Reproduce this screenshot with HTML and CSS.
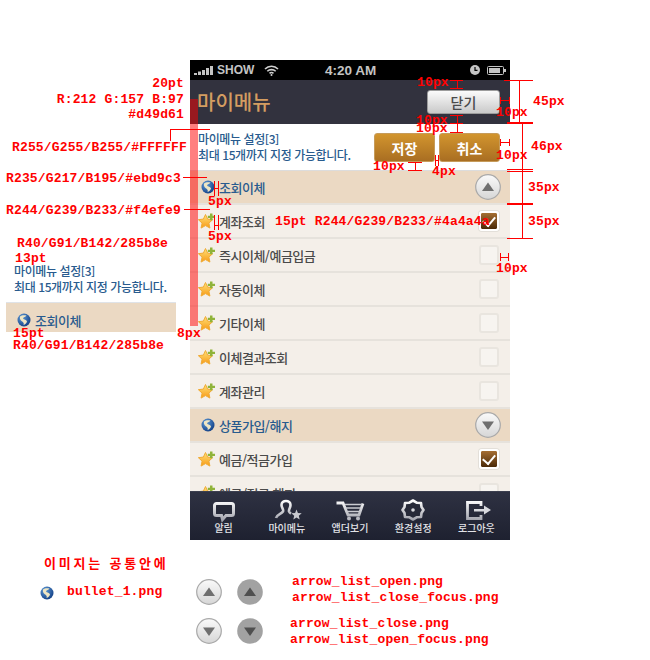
FILE: index.html
```html
<!DOCTYPE html>
<html lang="ko">
<head>
  <meta charset="UTF-8">
  <meta name="viewport" content="width=device-width, initial-scale=1.0">
  <title>마이메뉴</title>
  <link rel="stylesheet" href="styles.css">
</head>
<body>
  <svg class="defs" width="0" height="0">
    <defs>
      <radialGradient id="globe" cx="35%" cy="30%" r="75%">
        <stop offset="0" stop-color="#5f9bd8"/>
        <stop offset="1" stop-color="#123f85"/>
      </radialGradient>
      <linearGradient id="starfill" x1="0" y1="0" x2="0" y2="1">
        <stop offset="0" stop-color="#ffe27a"/>
        <stop offset="1" stop-color="#f79a16"/>
      </linearGradient>
      <linearGradient id="tabicon" gradientUnits="userSpaceOnUse" x1="0" y1="0" x2="0" y2="22">
        <stop offset="0" stop-color="#ffffff"/>
        <stop offset="1" stop-color="#9a9ca6"/>
      </linearGradient>
      <linearGradient id="knob" x1="0" y1="0" x2="0" y2="1">
        <stop offset="0" stop-color="#fafafa"/>
        <stop offset="1" stop-color="#d6d6d6"/>
      </linearGradient>
      <symbol id="bullet" viewBox="0 0 14 14">
        <circle cx="7" cy="7" r="6.500" fill="url(#globe)"/>
        <path d="M3 3.500c2-1.500 4-1.500 6.500-1-1 1.500-3 1.500-3.500 3 1 1.500 3.500 1 4 3-.5 2-2 3-3.500 3.500 1-2-.5-3-2-4C3.500 7 2.500 5.500 3 3.500z" fill="#efe6c4"/>
      </symbol>
      <symbol id="star" viewBox="0 0 18 17">
        <path d="M7.500 1.500L9.620 6.090 14.630 6.680 10.920 10.110 11.910 15.070 7.500 12.600 3.090 15.070 4.080 10.110 .37 6.680 5.380 6.090z" fill="url(#starfill)" stroke="#f0ab35" stroke-width="1" stroke-linejoin="round"/>
        <path d="M12 .5h2.500v2.200H17v2.400h-2.500v2.200H12V5.100H9.800V2.700H12z" fill="#8fb33a"/>
      </symbol>
      <symbol id="arrow-up" viewBox="0 0 26 26">
        <circle cx="13" cy="13" r="12.300" fill="url(#knob)" stroke="#a9a9a9" stroke-width="1.200"/>
        <path d="M13 8.500l6 8.500H7z" fill="#6f6f6f"/>
      </symbol>
      <symbol id="arrow-down" viewBox="0 0 26 26">
        <circle cx="13" cy="13" r="12.300" fill="url(#knob)" stroke="#a9a9a9" stroke-width="1.200"/>
        <path d="M13 18l-6-8.500h12z" fill="#6f6f6f"/>
      </symbol>
      <symbol id="arrow-up-focus" viewBox="0 0 26 26">
        <circle cx="13" cy="13" r="12.800" fill="#a2a2a2"/>
        <path d="M13 8.500l6 8.500H7z" fill="#4f4f4f"/>
      </symbol>
      <symbol id="arrow-down-focus" viewBox="0 0 26 26">
        <circle cx="13" cy="13" r="12.800" fill="#a2a2a2"/>
        <path d="M13 18l-6-8.500h12z" fill="#4f4f4f"/>
      </symbol>
    </defs>
  </svg>

  <div class="canvas">
    <div class="phone">
      <div class="status-bar">
        <span class="status-left">
          <svg width="19" height="9" viewBox="0 0 19 9"><path d="M0 7h3v2H0zM4 5.500h3V9H4zM8 4h3v5H8zM12 2h3v7h-3zM16 0h3v9h-3z" fill="#c4c4c4"/></svg>
          <span>SHOW</span>
          <svg class="wifi" width="15" height="11" viewBox="0 0 15 11"><path d="M1 4a9 9 0 0 1 13 0M3.300 6.300a6 6 0 0 1 8.400 0M5.500 8.400a3 3 0 0 1 4 0" fill="none" stroke="#d0d0d0" stroke-width="1.600"/><circle cx="7.500" cy="10" r="1" fill="#d0d0d0"/></svg>
        </span>
        <span class="status-time">4:20 AM</span>
        <span class="status-right">
          <svg width="10" height="10" viewBox="0 0 10 10"><circle cx="5" cy="5" r="5" fill="#c4c4c4"/><path d="M5 2v3.300h2.500" fill="none" stroke="#000" stroke-width="1.200"/></svg>
          <svg width="19" height="9" viewBox="0 0 19 9"><rect x=".5" y=".5" width="16" height="8" rx="1" fill="none" stroke="#c4c4c4"/><rect x="2" y="2" width="11" height="5" fill="#c4c4c4"/><rect x="17" y="3" width="2" height="3" fill="#c4c4c4"/></svg>
        </span>
      </div>

      <header class="title-bar">
        <h1>마이메뉴</h1>
        <button class="btn-close" type="button">닫기</button>
      </header>

      <section class="intro">
        <p>마이메뉴 설정[3]<br>최대 15개까지 지정 가능합니다.</p>
        <div class="intro-actions">
          <button class="btn-gold" type="button">저장</button>
          <button class="btn-gold" type="button">취소</button>
        </div>
      </section>

      <ul class="menu">
        <li class="menu-cat">
          <svg class="bullet"><use href="#bullet"/></svg>
          <span>조회이체</span>
          <svg class="toggle"><use href="#arrow-up"/></svg>
        </li>
        <li class="menu-item">
          <svg class="star"><use href="#star"/></svg>
          <span>계좌조회</span>
          <i class="check is-on"></i>
        </li>
        <li class="menu-item">
          <svg class="star"><use href="#star"/></svg>
          <span>즉시이체/예금입금</span>
          <i class="check"></i>
        </li>
        <li class="menu-item">
          <svg class="star"><use href="#star"/></svg>
          <span>자동이체</span>
          <i class="check"></i>
        </li>
        <li class="menu-item">
          <svg class="star"><use href="#star"/></svg>
          <span>기타이체</span>
          <i class="check"></i>
        </li>
        <li class="menu-item">
          <svg class="star"><use href="#star"/></svg>
          <span>이체결과조회</span>
          <i class="check"></i>
        </li>
        <li class="menu-item">
          <svg class="star"><use href="#star"/></svg>
          <span>계좌관리</span>
          <i class="check"></i>
        </li>
        <li class="menu-cat">
          <svg class="bullet"><use href="#bullet"/></svg>
          <span>상품가입/해지</span>
          <svg class="toggle"><use href="#arrow-down"/></svg>
        </li>
        <li class="menu-item">
          <svg class="star"><use href="#star"/></svg>
          <span>예금/적금가입</span>
          <i class="check is-on"></i>
        </li>
        <li class="menu-item">
          <svg class="star"><use href="#star"/></svg>
          <span>예금/적금 해지</span>
          <i class="check"></i>
        </li>
      </ul>

      <nav class="tab-bar">
        <a class="tab">
          <svg width="24" height="24" viewBox="0 0 24 24"><path d="M4.500 3.500h15a2 2 0 0 1 2 2v8a2 2 0 0 1-2 2H14l-3.500 4-1-4h-5a2 2 0 0 1-2-2v-8a2 2 0 0 1 2-2z" fill="#262938" stroke="url(#tabicon)" stroke-width="3"/></svg>
          <span>알림</span>
        </a>
        <a class="tab">
          <svg width="30" height="24" viewBox="0 0 30 24"><path d="M4 18c1-4 5-3.500 7-6.500 1-2-1.500-3.500-1.500-6.500 0-2.500 2-4 4.500-4s4.500 1.500 4.500 4c0 3-2 4.500-1.500 6.500.3 1 1 1.500 2 2" fill="none" stroke="url(#tabicon)" stroke-width="2.600"/><path d="M24.500 9.500L25.900 13.100 29.700 13.300 26.800 15.700 27.700 19.400 24.500 17.400 21.300 19.400 22.200 15.700 19.300 13.300 23.100 13.100z" fill="#c9cad0"/></svg>
          <span>마이메뉴</span>
        </a>
        <a class="tab">
          <svg width="28" height="24" viewBox="0 0 28 24"><path d="M.5 3H7l5 12h11l4-11.500" fill="none" stroke="url(#tabicon)" stroke-width="2.800"/><path d="M9 4.500h17M10 8h14.500M11.500 11.500h12" stroke="#c9cad0" stroke-width="1.500"/><circle cx="13" cy="18.500" r="2" fill="#b9bac2"/><circle cx="22" cy="18.500" r="2" fill="#b9bac2"/></svg>
          <span>앱더보기</span>
        </a>
        <a class="tab">
          <svg width="24" height="24" viewBox="0 0 24 24"><path d="M12 .5L16 2.800 20 3 20.500 7 22.500 10 20.500 13 20 17 16 17.200 12 19.500 8 17.200 4 17 3.500 13 1.500 10 3.500 7 4 3 8 2.800z" fill="#262938" stroke="url(#tabicon)" stroke-width="2.600" stroke-linejoin="round"/><circle cx="12" cy="10" r="1.800" fill="#d8d9de"/></svg>
          <span>환경설정</span>
        </a>
        <a class="tab">
          <svg width="26" height="24" viewBox="0 0 26 24"><path d="M18 6V2.500H4.500v16H18V15" fill="none" stroke="url(#tabicon)" stroke-width="2.800"/><path d="M11 9h10V5.500l7 4.500-7 4.500v-3H11z" fill="#d8d9de"/></svg>
          <span>로그아웃</span>
        </a>
      </nav>
      <div class="guide-bar"></div>
    </div>

    <!-- spec notes -->
    <span class="note note-r title-size">20pt</span>
    <span class="note note-r title-rgb">R:212 G:157 B:97</span>
    <span class="note note-r title-hex">#d49d61</span>
    <span class="note color-white">R255/G255/B255/#FFFFFF</span>
    <span class="note color-tan">R235/G217/B195/#ebd9c3</span>
    <span class="note color-row">R244/G239/B233/#f4efe9</span>
    <span class="note color-intro">R40/G91/B142/285b8e</span>
    <span class="note size-intro">13pt</span>

    <p class="sample-text">마이메뉴 설정[3]<br>최대 15개까지 지정 가능합니다.</p>
    <div class="sample-cat">
      <svg class="bullet"><use href="#bullet"/></svg>
      <span>조회이체</span>
    </div>
    <span class="note size-cat">15pt</span>
    <span class="note color-cat">R40/G91/B142/285b8e</span>
    <span class="note gap-8">8px</span>

    <span class="note gap-a">10px</span>
    <span class="note gap-b">10px</span>
    <span class="note gap-c">10px</span>
    <span class="note gap-d">10px</span>
    <span class="note gap-e">10px</span>
    <span class="note gap-f">10px</span>
    <span class="note gap-4">4px</span>
    <span class="note height-title">45px</span>
    <span class="note height-intro">46px</span>
    <span class="note height-cat">35px</span>
    <span class="note height-row">35px</span>
    <span class="note gap-cat">5px</span>
    <span class="note gap-row">5px</span>
    <span class="note row-spec">15pt R244/G239/B233/#4a4a4a</span>
    <span class="note gap-check">10px</span>

    <svg class="guides" width="650" height="660" viewBox="0 0 650 660">
      <path d="M170 129.500h40M170.500 129v12M183 177.500h24M184 209.500h26M214.500 181v15M218.500 181v15M214 188.500h5M214.500 215v15M218.500 215v15M214 225.500h5" />
      <path d="M450 80.500h13M450 88.500h13M457.500 80v9M500 100.500h10M500.500 97v7M509.500 97v7M450 115.500h13M450 123.500h13M450 132.500h13M457.500 115v18M408 162.500h14M408 170.500h14M415.500 162v9M435.500 155v11M438.500 155v11M435 160.500h4M500 142.500h10M500.500 139v7M509.500 139v7" />
      <path d="M504 80.500h29M519.500 80v44M507 122.500h26M507 123.500h26M522.500 124v114M507 169.500h26M507 171.500h26M507 203.500h26M507 204.500h26M507 238.500h26M500 257.500h9M500.500 253v8M508.500 253v8" />
    </svg>

    <span class="note note-img">이미지는 공통안에</span>
    <svg class="bullet bullet-free"><use href="#bullet"/></svg>
    <span class="note file-bullet">bullet_1.png</span>
    <svg class="knob knob-a"><use href="#arrow-up"/></svg>
    <svg class="knob knob-b"><use href="#arrow-up-focus"/></svg>
    <svg class="knob knob-c"><use href="#arrow-down"/></svg>
    <svg class="knob knob-d"><use href="#arrow-down-focus"/></svg>
    <span class="note file-a">arrow_list_open.png</span>
    <span class="note file-b">arrow_list_close_focus.png</span>
    <span class="note file-c">arrow_list_close.png</span>
    <span class="note file-d">arrow_list_open_focus.png</span>
  </div>
</body>
</html>
```

FILE: styles.css
```css
* {
  box-sizing: border-box;
}
html, body {
  margin: 0;
  padding: 0;
  background-color: #fff;
}
body {
  font-family: "Noto Sans CJK KR", "Liberation Sans", sans-serif;
}
.defs {
  position: absolute;
}
.canvas {
  position: relative;
  width: 650px;
  height: 660px;
  overflow: hidden;
}

/* phone */
.phone {
  position: absolute;
  left: 190px;
  top: 60px;
  width: 320px;
  height: 480px;
  display: flex;
  flex-direction: column;
  overflow: hidden;
  background-color: #f4efe9;
}
.status-bar {
  flex: 0 0 20px;
  display: flex;
  align-items: center;
  justify-content: space-between;
  position: relative;
  padding: 0 4px;
  background-color: #000;
  color: #c4c4c4;
  font: 700 12px "Liberation Sans", sans-serif;
}
.status-left, .status-right {
  display: flex;
  align-items: center;
  gap: 4px;
}
.status-right {
  gap: 7px;
}
.wifi {
  margin-left: 6px;
}
.status-time {
  position: absolute;
  left: 135px;
  font-size: 13.500px;
}
.title-bar {
  flex: 0 0 44px;
  display: flex;
  align-items: flex-start;
  justify-content: space-between;
  padding: 10px 10px 0 7px;
  background: #32323e;
}
.title-bar h1 {
  margin: 0;
  color: #d49d61;
  font-size: 20px;
  font-weight: 500;
  line-height: 24px;
}
.btn-close {
  width: 73px;
  height: 24px;
  padding: 0;
  border: 1px solid #9c9c9c;
  border-radius: 3px;
  background: linear-gradient(#fbfbfb, #c9c9c9);
  color: #4a4a4a;
  font: 500 14px "Noto Sans CJK KR", sans-serif;
}
.intro {
  flex: 0 0 47px;
  display: flex;
  align-items: flex-start;
  justify-content: space-between;
  padding: 9px 10px 0 8px;
  background-color: #fff;
  border-bottom: 1px solid #dcdcdc;
}
.intro p {
  margin: -2px 0 0;
  color: #285b8e;
  font-size: 12px;
  font-weight: 500;
  line-height: 16px;
  letter-spacing: -.4px;
}
.intro-actions {
  display: flex;
  gap: 4px;
}
.btn-gold {
  width: 61px;
  height: 29px;
  padding: 0;
  border: 1px solid #c69b5a;
  border-radius: 3px;
  background: linear-gradient(#d2952e, #a96e22);
  color: #fff;
  font: 700 14px "Noto Sans CJK KR", sans-serif;
}

/* list */
.menu {
  flex: 1;
  margin: 0;
  padding: 0;
  list-style: none;
  overflow: hidden;
}
.menu li {
  height: 34px;
  display: flex;
  align-items: center;
  border-bottom: 2px solid #e6e2dc;
}
.menu-cat {
  padding: 0 9px 0 11px;
  background-color: #ebd9c3;
  color: #285b8e;
  font-size: 13px;
  font-weight: 500;
}
.menu-item {
  padding: 0 11px 0 8px;
  background-color: #f4efe9;
  color: #4a4a4a;
  font-size: 13px;
  font-weight: 500;
}
.menu li span {
  flex: 1;
  letter-spacing: -.5px;
}
.bullet {
  width: 14px;
  height: 14px;
  margin-right: 4px;
}
.star {
  width: 18px;
  height: 17px;
  margin-right: 3px;
}
.toggle {
  width: 26px;
  height: 26px;
}
.check {
  display: block;
  width: 20px;
  height: 20px;
  border: 2px solid #e9e5df;
  border-radius: 3px;
  background-color: #f7f4f0;
}
.check.is-on {
  position: relative;
  border: 2px solid #fff;
  background: linear-gradient(#a56e32, #4a2a08);
  background-clip: padding-box;
  box-shadow: 0 0 0 1px #e3dfd9;
}
.check.is-on::after {
  content: "";
  position: absolute;
  left: 4px;
  top: 1px;
  width: 6px;
  height: 10px;
  border: solid #fff;
  border-width: 0 2px 2px 0;
  transform: rotate(40deg);
}

/* bottom tabs */
.tab-bar {
  flex: 0 0 49px;
  display: flex;
  justify-content: space-between;
  padding: 8px 2px 0;
  background: linear-gradient(#2e3142, #1e2130);
  border-top: 1px solid #3c3f4f;
}
.tab {
  width: 64px;
  display: flex;
  flex-direction: column;
  align-items: center;
  color: #e2e3e8;
  font-size: 10px;
  font-weight: 500;
  line-height: 12px;
}
.tab svg {
  margin-bottom: -2px;
  overflow: visible;
}
.guide-bar {
  position: absolute;
  left: 0;
  top: 39px;
  width: 8px;
  height: 227px;
  background-color: rgba(255, 0, 0, .5);
}

/* spec notes around the phone */
.note {
  position: absolute;
  color: #f00;
  font: 700 13px/14px "Liberation Mono", monospace;
  letter-spacing: .15px;
  white-space: nowrap;
}
.note-r { right: 466px; }
.title-size { top: 77px; }
.title-rgb { top: 93px; }
.title-hex { top: 108px; }
.color-white { left: 12px; top: 141px; }
.color-tan { left: 6px; top: 172px; }
.color-row { left: 6px; top: 204px; }
.color-intro { left: 17px; top: 237px; }
.size-intro { left: 15px; top: 252px; }
.size-cat { left: 13px; top: 327px; }
.color-cat { left: 13px; top: 339px; }
.gap-8 { left: 177px; top: 327px; }
.gap-a { left: 417px; top: 76px; }
.gap-b { left: 496px; top: 106px; }
.gap-c { left: 416px; top: 114px; }
.gap-d { left: 416px; top: 122px; }
.gap-e { left: 496px; top: 149px; }
.gap-f { left: 373px; top: 160px; }
.gap-4 { left: 432px; top: 165px; }
.height-title { left: 533px; top: 95px; }
.height-intro { left: 531px; top: 140px; }
.height-cat { left: 528px; top: 181px; }
.height-row { left: 528px; top: 215px; }
.gap-cat { left: 208px; top: 195px; }
.gap-row { left: 208px; top: 230px; }
.row-spec { left: 275px; top: 215px; }
.gap-check { left: 496px; top: 262px; }
.file-bullet { left: 67px; top: 585px; }
.file-a { left: 292px; top: 575px; }
.file-b { left: 292px; top: 591px; }
.file-c { left: 290px; top: 617px; }
.file-d { left: 290px; top: 633px; }
.note-img {
  left: 44px;
  top: 556px;
  font-family: "Noto Sans CJK KR", sans-serif;
  font-size: 13px;
  letter-spacing: 2.800px;
}
.sample-text {
  position: absolute;
  left: 14px;
  top: 263px;
  margin: 0;
  color: #285b8e;
  font-size: 12px;
  font-weight: 500;
  line-height: 16px;
  letter-spacing: -.4px;
}
.sample-cat {
  position: absolute;
  left: 6px;
  top: 302px;
  width: 170px;
  height: 30px;
  display: flex;
  align-items: center;
  padding: 5px 0 0 11px;
  background-color: #ebd9c3;
  border-top: 1px solid #dfe3e8;
  color: #285b8e;
  font-size: 13px;
  font-weight: 500;
  letter-spacing: -.5px;
}
.guides {
  position: absolute;
  left: 0;
  top: 0;
  pointer-events: none;
}
.guides path {
  fill: none;
  stroke: #f00;
  stroke-width: 1;
}
.bullet-free {
  position: absolute;
  left: 40px;
  top: 586px;
  margin: 0;
}
.knob {
  position: absolute;
  width: 26px;
  height: 26px;
}
.knob-a { left: 196px; top: 579px; }
.knob-b { left: 237px; top: 579px; }
.knob-c { left: 196px; top: 618px; }
.knob-d { left: 237px; top: 618px; }
```
